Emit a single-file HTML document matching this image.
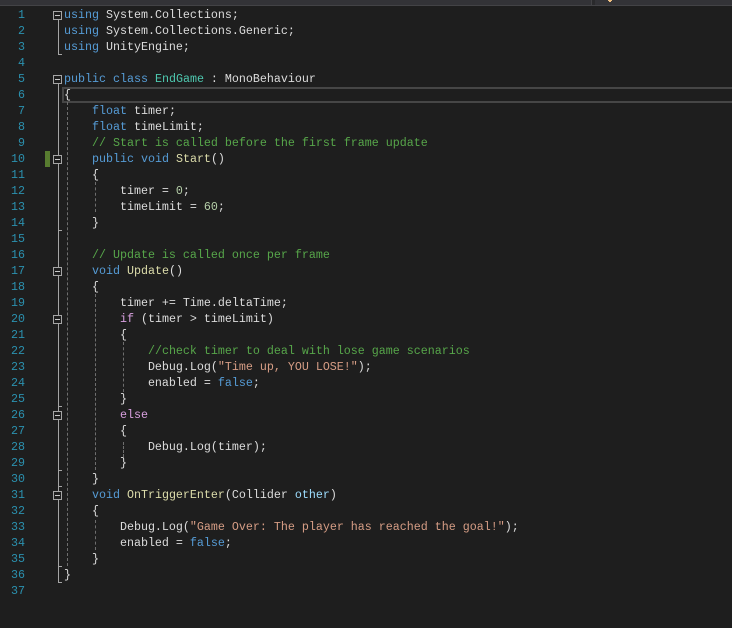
<!DOCTYPE html>
<html>
<head>
<meta charset="utf-8">
<style>
html,body{margin:0;padding:0;background:#1e1e1e;}
#root{position:relative;width:732px;height:628px;overflow:hidden;background:#1e1e1e;}
.a{position:absolute;}
.l{position:absolute;left:64px;height:16px;line-height:16px;font-family:"Liberation Mono",monospace;font-size:11.67px;color:#dcdcdc;white-space:pre;}
.n{position:absolute;left:0;width:25px;text-align:right;height:16px;line-height:16px;font-family:"Liberation Mono",monospace;font-size:11.67px;color:#2b91af;}
.k{color:#569cd6}.t{color:#4ec9b0}.m{color:#dcdcaa}.c{color:#57a64a}.s{color:#d69d85}.d{color:#b5cea8}.f{color:#d8a0df}.p{color:#9cdcfe}
.b{position:absolute;left:53px;width:7px;height:7px;border:1px solid #a5a5a5;background:#1e1e1e;}
.b:after{content:"";position:absolute;left:1px;top:3px;width:5px;height:1px;background:#c8c8c8;}
.v{position:absolute;width:1px;background:#a5a5a5;left:58px;}
.h{position:absolute;height:1px;width:4px;left:58px;background:#a5a5a5;}
.x{position:absolute;width:0;border-left:1px dashed #6e6e6e;}
</style>
</head>
<body>
<div id="root">
<div class="a" style="left:0;top:0;width:732px;height:5px;background:#333337"></div>
<div class="a" style="left:0;top:5px;width:732px;height:1px;background:#434346"></div>
<div class="a" style="left:591px;top:0;width:1px;height:6px;background:#434346"></div>
<div class="a" style="left:592px;top:0;width:3px;height:5px;background:#2a2a2c"></div>
<div class="a" style="left:608px;top:0;width:4px;height:1px;background:#f0c080"></div>
<div class="a" style="left:609px;top:1px;width:2px;height:1px;background:#f0c080"></div>

<div class="a" style="left:62px;top:87px;width:680px;height:12px;border:2px solid #464646"></div>
<div class="a" style="left:45px;top:151px;width:5px;height:16px;background:#587c30"></div>

<div class="v" style="top:20px;height:34px"></div>
<div class="h" style="top:54px"></div>
<div class="v" style="top:84px;height:498px"></div>
<div class="h" style="top:582px"></div>
<div class="h" style="top:230px"></div>
<div class="h" style="top:406px"></div>
<div class="h" style="top:470px"></div>
<div class="h" style="top:486px"></div>
<div class="h" style="top:566px"></div>
<div class="b" style="top:11px"></div>
<div class="b" style="top:75px"></div>
<div class="b" style="top:155px"></div>
<div class="b" style="top:267px"></div>
<div class="b" style="top:315px"></div>
<div class="b" style="top:411px"></div>
<div class="b" style="top:491px"></div>

<div class="x" style="left:67px;top:102px;height:464px"></div>
<div class="x" style="left:95px;top:182px;height:30px"></div>
<div class="x" style="left:95px;top:294px;height:176px"></div>
<div class="x" style="left:95px;top:520px;height:30px"></div>
<div class="x" style="left:123px;top:342px;height:50px"></div>
<div class="x" style="left:123px;top:442px;height:15px"></div>

<div class="n" style="top:7px">1</div>
<div class="n" style="top:23px">2</div>
<div class="n" style="top:39px">3</div>
<div class="n" style="top:55px">4</div>
<div class="n" style="top:71px">5</div>
<div class="n" style="top:87px">6</div>
<div class="n" style="top:103px">7</div>
<div class="n" style="top:119px">8</div>
<div class="n" style="top:135px">9</div>
<div class="n" style="top:151px">10</div>
<div class="n" style="top:167px">11</div>
<div class="n" style="top:183px">12</div>
<div class="n" style="top:199px">13</div>
<div class="n" style="top:215px">14</div>
<div class="n" style="top:231px">15</div>
<div class="n" style="top:247px">16</div>
<div class="n" style="top:263px">17</div>
<div class="n" style="top:279px">18</div>
<div class="n" style="top:295px">19</div>
<div class="n" style="top:311px">20</div>
<div class="n" style="top:327px">21</div>
<div class="n" style="top:343px">22</div>
<div class="n" style="top:359px">23</div>
<div class="n" style="top:375px">24</div>
<div class="n" style="top:391px">25</div>
<div class="n" style="top:407px">26</div>
<div class="n" style="top:423px">27</div>
<div class="n" style="top:439px">28</div>
<div class="n" style="top:455px">29</div>
<div class="n" style="top:471px">30</div>
<div class="n" style="top:487px">31</div>
<div class="n" style="top:503px">32</div>
<div class="n" style="top:519px">33</div>
<div class="n" style="top:535px">34</div>
<div class="n" style="top:551px">35</div>
<div class="n" style="top:567px">36</div>
<div class="n" style="top:583px">37</div>

<div class="l" style="top:7px"><span class="k">using</span> System.Collections;</div>
<div class="l" style="top:23px"><span class="k">using</span> System.Collections.Generic;</div>
<div class="l" style="top:39px"><span class="k">using</span> UnityEngine;</div>
<div class="l" style="top:71px"><span class="k">public</span> <span class="k">class</span> <span class="t">EndGame</span> : MonoBehaviour</div>
<div class="l" style="top:87px">{</div>
<div class="l" style="top:103px">    <span class="k">float</span> timer;</div>
<div class="l" style="top:119px">    <span class="k">float</span> timeLimit;</div>
<div class="l" style="top:135px">    <span class="c">// Start is called before the first frame update</span></div>
<div class="l" style="top:151px">    <span class="k">public</span> <span class="k">void</span> <span class="m">Start</span>()</div>
<div class="l" style="top:167px">    {</div>
<div class="l" style="top:183px">        timer = <span class="d">0</span>;</div>
<div class="l" style="top:199px">        timeLimit = <span class="d">60</span>;</div>
<div class="l" style="top:215px">    }</div>
<div class="l" style="top:247px">    <span class="c">// Update is called once per frame</span></div>
<div class="l" style="top:263px">    <span class="k">void</span> <span class="m">Update</span>()</div>
<div class="l" style="top:279px">    {</div>
<div class="l" style="top:295px">        timer += Time.deltaTime;</div>
<div class="l" style="top:311px">        <span class="f">if</span> (timer &gt; timeLimit)</div>
<div class="l" style="top:327px">        {</div>
<div class="l" style="top:343px">            <span class="c">//check timer to deal with lose game scenarios</span></div>
<div class="l" style="top:359px">            Debug.Log(<span class="s">"Time up, YOU LOSE!"</span>);</div>
<div class="l" style="top:375px">            enabled = <span class="k">false</span>;</div>
<div class="l" style="top:391px">        }</div>
<div class="l" style="top:407px">        <span class="f">else</span></div>
<div class="l" style="top:423px">        {</div>
<div class="l" style="top:439px">            Debug.Log(timer);</div>
<div class="l" style="top:455px">        }</div>
<div class="l" style="top:471px">    }</div>
<div class="l" style="top:487px">    <span class="k">void</span> <span class="m">OnTriggerEnter</span>(Collider <span class="p">other</span>)</div>
<div class="l" style="top:503px">    {</div>
<div class="l" style="top:519px">        Debug.Log(<span class="s">"Game Over: The player has reached the goal!"</span>);</div>
<div class="l" style="top:535px">        enabled = <span class="k">false</span>;</div>
<div class="l" style="top:551px">    }</div>
<div class="l" style="top:567px">}</div>
</div>
</body>
</html>
